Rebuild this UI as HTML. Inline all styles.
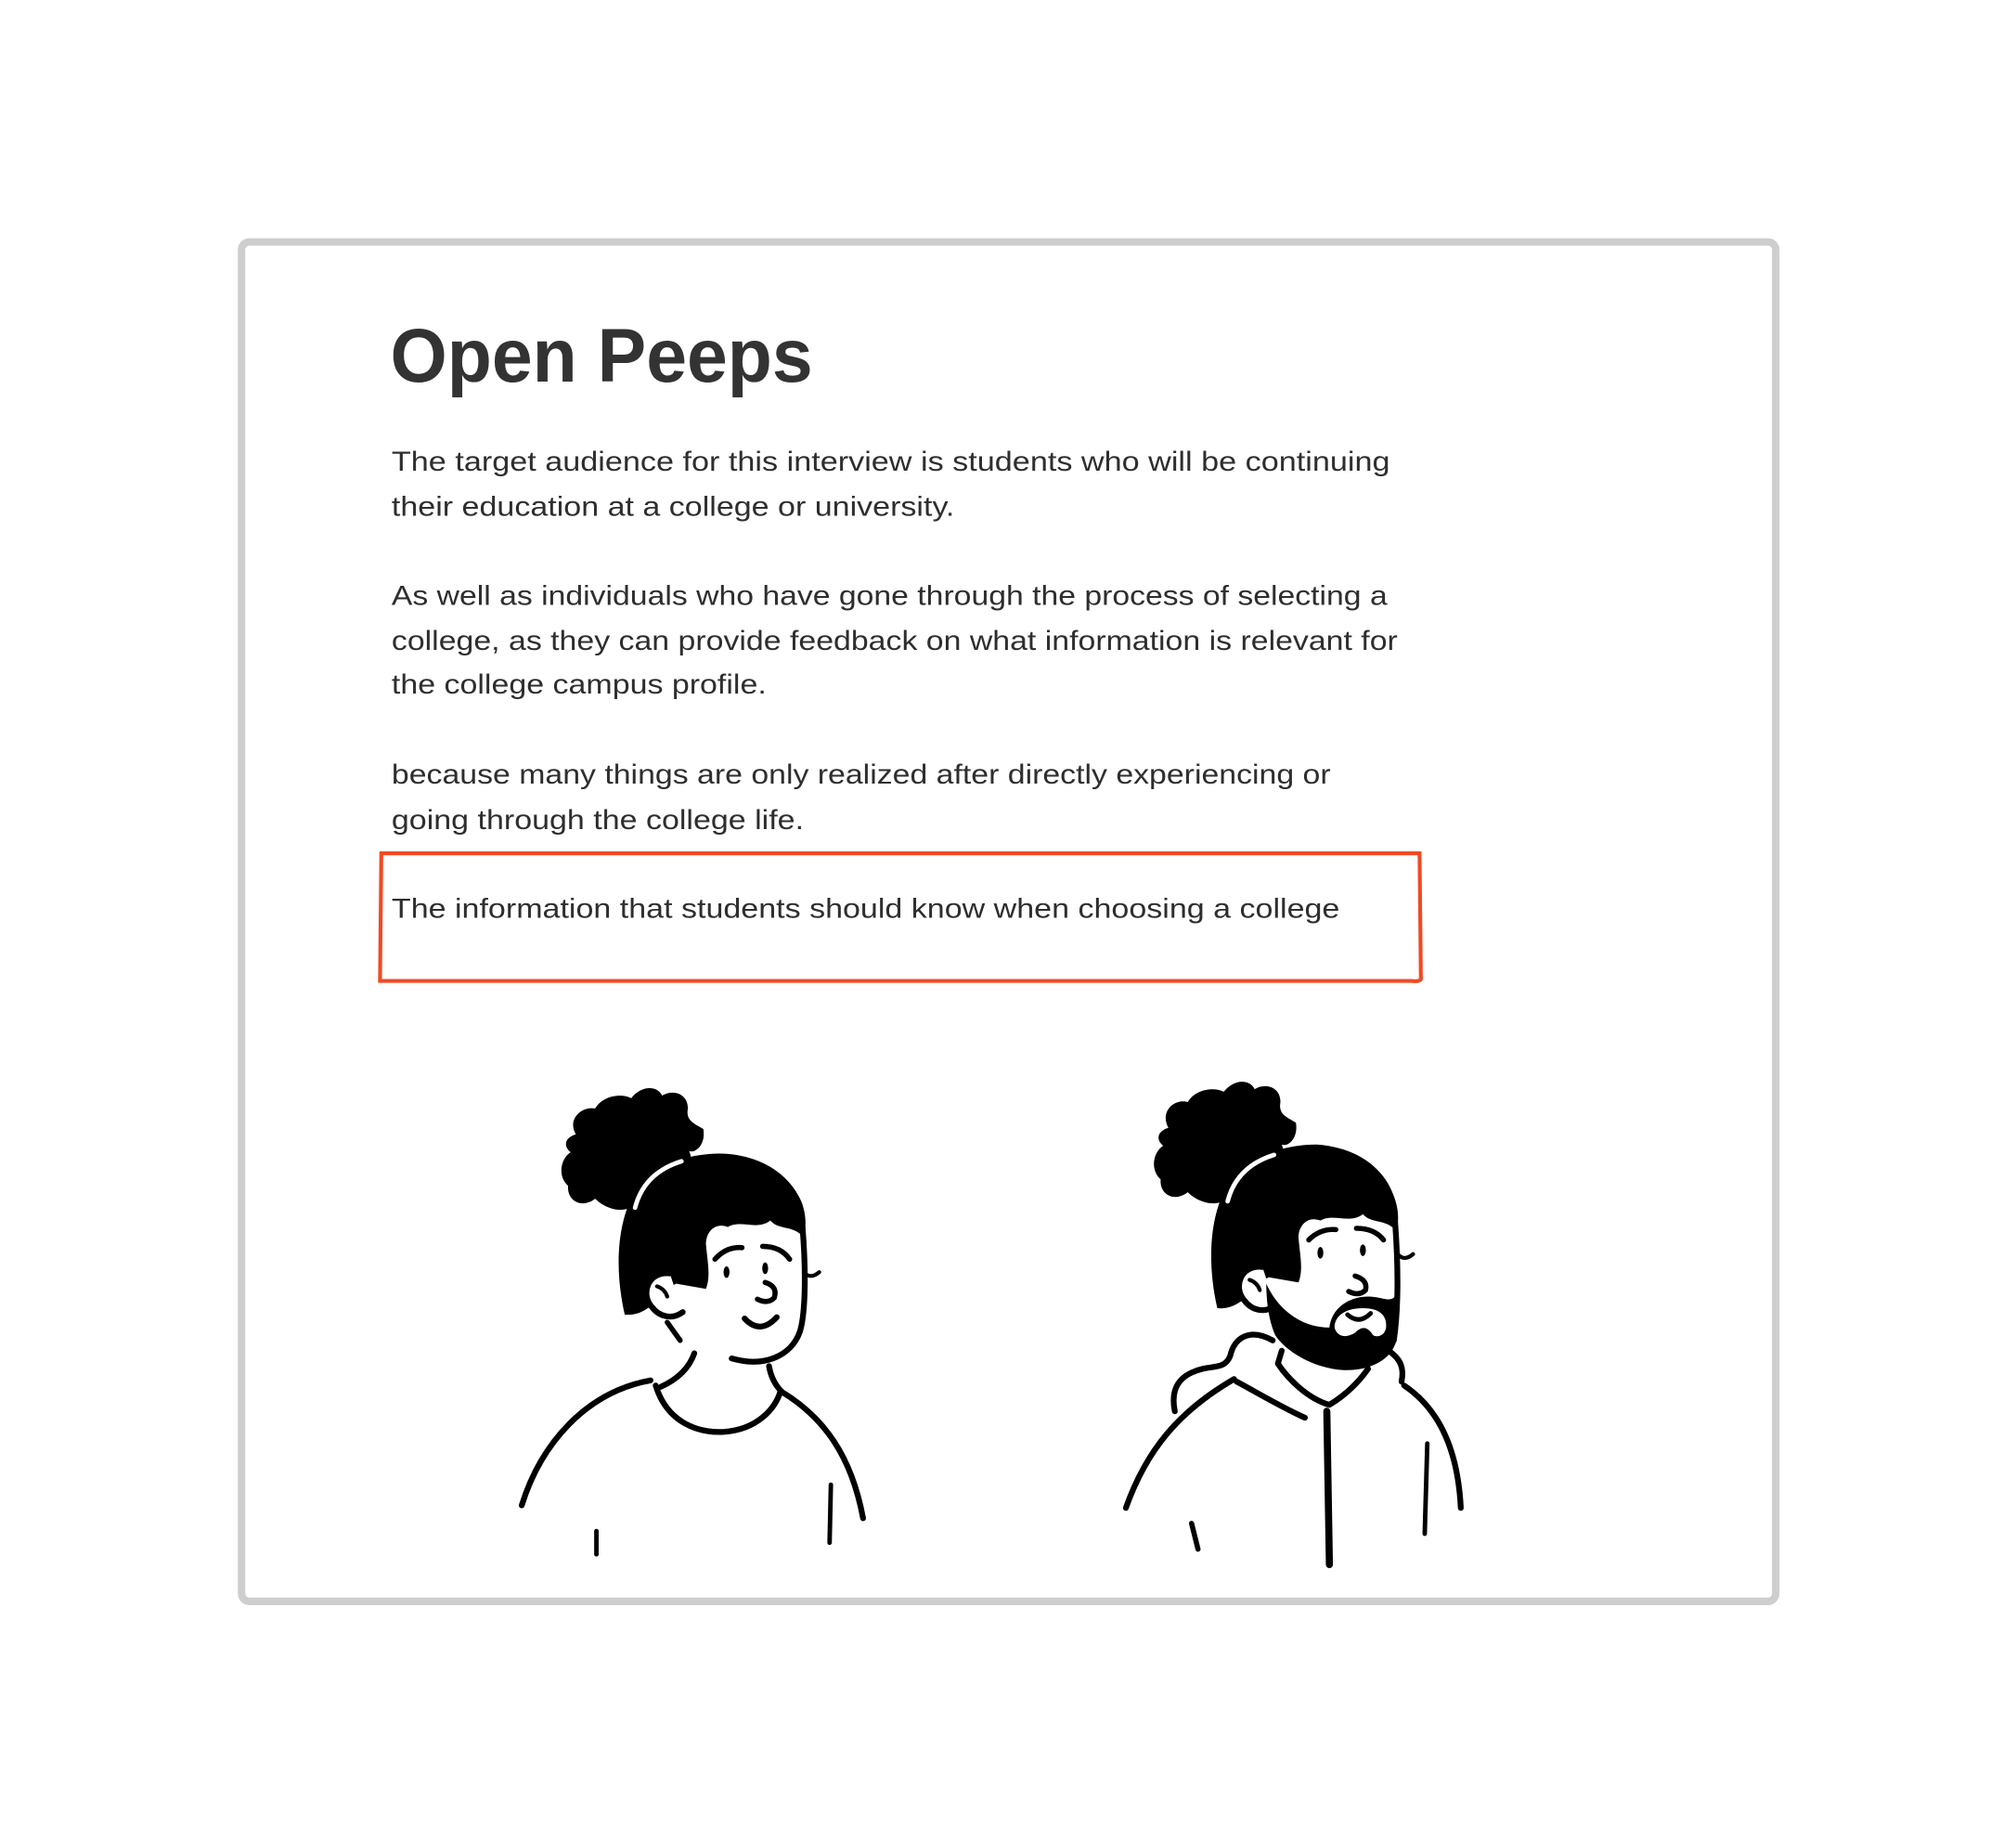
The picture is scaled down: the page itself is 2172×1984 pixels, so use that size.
<!DOCTYPE html>
<html><head><meta charset="utf-8"><style>
html,body{margin:0;padding:0;background:#fff;width:2172px;height:1984px;overflow:hidden}
svg{display:block}
text{font-family:"Liberation Sans",sans-serif;fill:#2e2e2e}
</style></head><body>
<svg width="2172" height="1984" viewBox="0 0 1565 1429" xmlns="http://www.w3.org/2000/svg">
<rect x="187.5" y="187.5" width="1191" height="1055" rx="6" fill="#fff" stroke="#cfcecf" stroke-width="5.8"/>
<text x="303" y="296" font-size="59" font-weight="bold" textLength="328" lengthAdjust="spacingAndGlyphs" style="fill:#333">Open Peeps</text>
<g font-size="21.5">
<text x="304" y="365" textLength="775" lengthAdjust="spacingAndGlyphs">The target audience for this interview is students who will be continuing</text>
<text x="304" y="400" textLength="437" lengthAdjust="spacingAndGlyphs">their education at a college or university.</text>
<text x="304" y="469" textLength="773" lengthAdjust="spacingAndGlyphs">As well as individuals who have gone through the process of selecting a</text>
<text x="304" y="504" textLength="781" lengthAdjust="spacingAndGlyphs">college, as they can provide feedback on what information is relevant for</text>
<text x="304" y="538" textLength="291" lengthAdjust="spacingAndGlyphs">the college campus profile.</text>
<text x="304" y="608" textLength="729" lengthAdjust="spacingAndGlyphs">because many things are only realized after directly experiencing or</text>
<text x="304" y="643" textLength="320" lengthAdjust="spacingAndGlyphs">going through the college life.</text>
<text x="304" y="712" textLength="736" lengthAdjust="spacingAndGlyphs">The information that students should know when choosing a college</text>
</g>
<path d="M296,662 L1102,662 L1103,758 Q1104,762 1096,761 L295,761 Z" fill="none" stroke="#f04a24" stroke-width="3"/>

<g id="woman" fill="none" stroke="#000" stroke-width="4.5" stroke-linecap="round" stroke-linejoin="round">
<path stroke="none" fill="#000" d="M447,880 C440,868 452,858 462,860 C468,850 482,848 490,852 C498,842 510,842 514,850 C522,845 534,848 534,860 C532,870 540,872 546,876 C548,888 540,895 535,893 C540,905 530,912 522,905 C512,915 500,915 492,935 C484,942 470,938 462,930 C452,938 440,932 441,920 C432,912 436,898 443,894 C436,888 440,882 447,880 Z"/>
<path stroke="none" fill="#000" d="M485,1020 C478,990 478,955 490,930 C505,905 530,895 560,895 C590,896 612,910 622,932 C626,942 626,952 624,960 C615,950 605,955 598,947 C588,955 575,946 565,952 C555,948 548,956 548,965 C549,978 552,990 548,1000 L525,996 C515,1000 505,1022 485,1020 Z"/>
<path d="M493,937 Q500,910 529,901" stroke="#fff" stroke-width="3.5"/>
<path d="M623,952 C626,990 625,1020 621,1033 C614,1053 592,1061 568,1054"/>
<path d="M520,988 C503,986 497,1004 506,1014 C512,1022 522,1024 530,1018" fill="#fff"/>
<path d="M510,998 Q516,1000 518,1006" stroke-width="3"/>
<path d="M518,1026 L528,1040" stroke-width="4"/>
<ellipse cx="564" cy="987" rx="2.3" ry="4.5" fill="#000" stroke="none"/>
<ellipse cx="594" cy="984" rx="2.3" ry="4.5" fill="#000" stroke="none"/>
<path d="M555,977 Q564,967 576,968" stroke-width="4"/>
<path d="M592,967 Q606,967 613,977" stroke-width="4"/>
<path d="M624,987 Q629,993 636,987" stroke-width="3"/>
<path d="M594,995 Q604,998 601,1007 Q596,1012 588,1008" stroke-width="4"/>
<path d="M578,1023 Q590,1036 603,1022" stroke-width="4.5"/>
<path d="M539,1050 Q533,1067 513,1076"/>
<path d="M597,1060 Q599,1072 607,1080"/>
<path d="M405,1168 C420,1120 455,1080 505,1071"/>
<path d="M509,1075 C518,1104 542,1112 562,1111 C588,1109 602,1093 606,1079"/>
<path d="M607,1080 C640,1100 661,1130 670,1178"/>
<path d="M463,1188 L463,1206" stroke-width="3.5"/>
<path d="M645,1152 L644,1197" stroke-width="3.5"/>
</g>

<g id="man" fill="none" stroke="#000" stroke-width="4.5" stroke-linecap="round" stroke-linejoin="round">
<path stroke="none" fill="#000" d="M907,875 C900,862 912,852 922,855 C928,845 942,843 950,847 C958,837 970,837 974,845 C982,840 994,843 994,855 C992,865 1000,867 1006,871 C1008,883 1000,890 995,888 C1000,900 990,907 982,900 C972,910 960,910 952,930 C944,937 930,933 922,925 C912,933 900,927 901,915 C892,907 896,893 903,889 C896,883 900,877 907,875 Z"/>
<path stroke="none" fill="#000" d="M945,1015 C938,985 938,950 950,925 C965,900 992,888 1022,888 C1052,890 1074,905 1082,928 C1086,938 1086,948 1084,955 C1075,945 1065,950 1058,942 C1048,950 1035,941 1025,947 C1015,943 1008,951 1008,960 C1009,973 1012,985 1008,995 L985,991 C975,995 965,1017 945,1015 Z"/>
<path d="M953,932 Q960,905 989,896" stroke="#fff" stroke-width="3.5"/>
<path d="M1083,948 C1086,990 1085,1020 1082,1040"/>
<path d="M980,983 C963,981 957,999 966,1009 C972,1017 982,1019 990,1013" fill="#fff"/>
<path d="M970,993 Q976,995 978,1001" stroke-width="3"/>
<path stroke="none" fill="#000" d="M983,996 C993,1018 1012,1030 1032,1030 C1034,1014 1048,1006 1062,1006 C1074,1006 1080,1012 1084,1004 L1084,1040 C1080,1056 1062,1064 1042,1063 C1018,1061 998,1048 990,1036 C985,1025 983,1010 983,996 Z"/>
<path stroke="none" fill="#fff" d="M1036,1030 C1036,1020 1046,1015 1058,1015 C1070,1015 1077,1020 1076,1030 C1075,1036 1070,1038 1066,1036 C1062,1030 1058,1028 1052,1034 C1046,1038 1038,1038 1036,1030 Z"/>
<ellipse cx="1025" cy="972" rx="2.3" ry="4.5" fill="#000" stroke="none"/>
<ellipse cx="1058" cy="970" rx="2.3" ry="4.5" fill="#000" stroke="none"/>
<path d="M1016,962 Q1025,953 1037,954" stroke-width="4"/>
<path d="M1053,953 Q1067,953 1074,962" stroke-width="4"/>
<path d="M1085,973 Q1090,979 1097,973" stroke-width="3"/>
<path d="M1052,990 Q1062,993 1060,1001 Q1055,1006 1047,1002" stroke-width="4"/>
<path d="M1046,1020 Q1055,1028 1064,1019" stroke-width="3.5"/>
<path d="M995,1048 L992,1058 C1000,1070 1015,1085 1032,1090 C1045,1082 1055,1072 1062,1062"/>
<path d="M988,1040 C970,1030 958,1038 955,1052 C950,1064 940,1058 925,1065 C910,1072 910,1085 912,1095"/>
<path d="M960,1072 C975,1080 995,1092 1013,1100"/>
<path d="M1078,1048 C1088,1055 1090,1062 1088,1072"/>
<path d="M874,1170 C890,1125 915,1095 958,1070"/>
<path d="M1090,1075 C1120,1095 1132,1130 1134,1170"/>
<path d="M1030,1095 L1032,1214" stroke-width="5.5"/>
<path d="M925,1182 L930,1202" stroke-width="4"/>
<path d="M1108,1120 L1106,1190" stroke-width="3.5"/>
</g>
</svg>
</body></html>
